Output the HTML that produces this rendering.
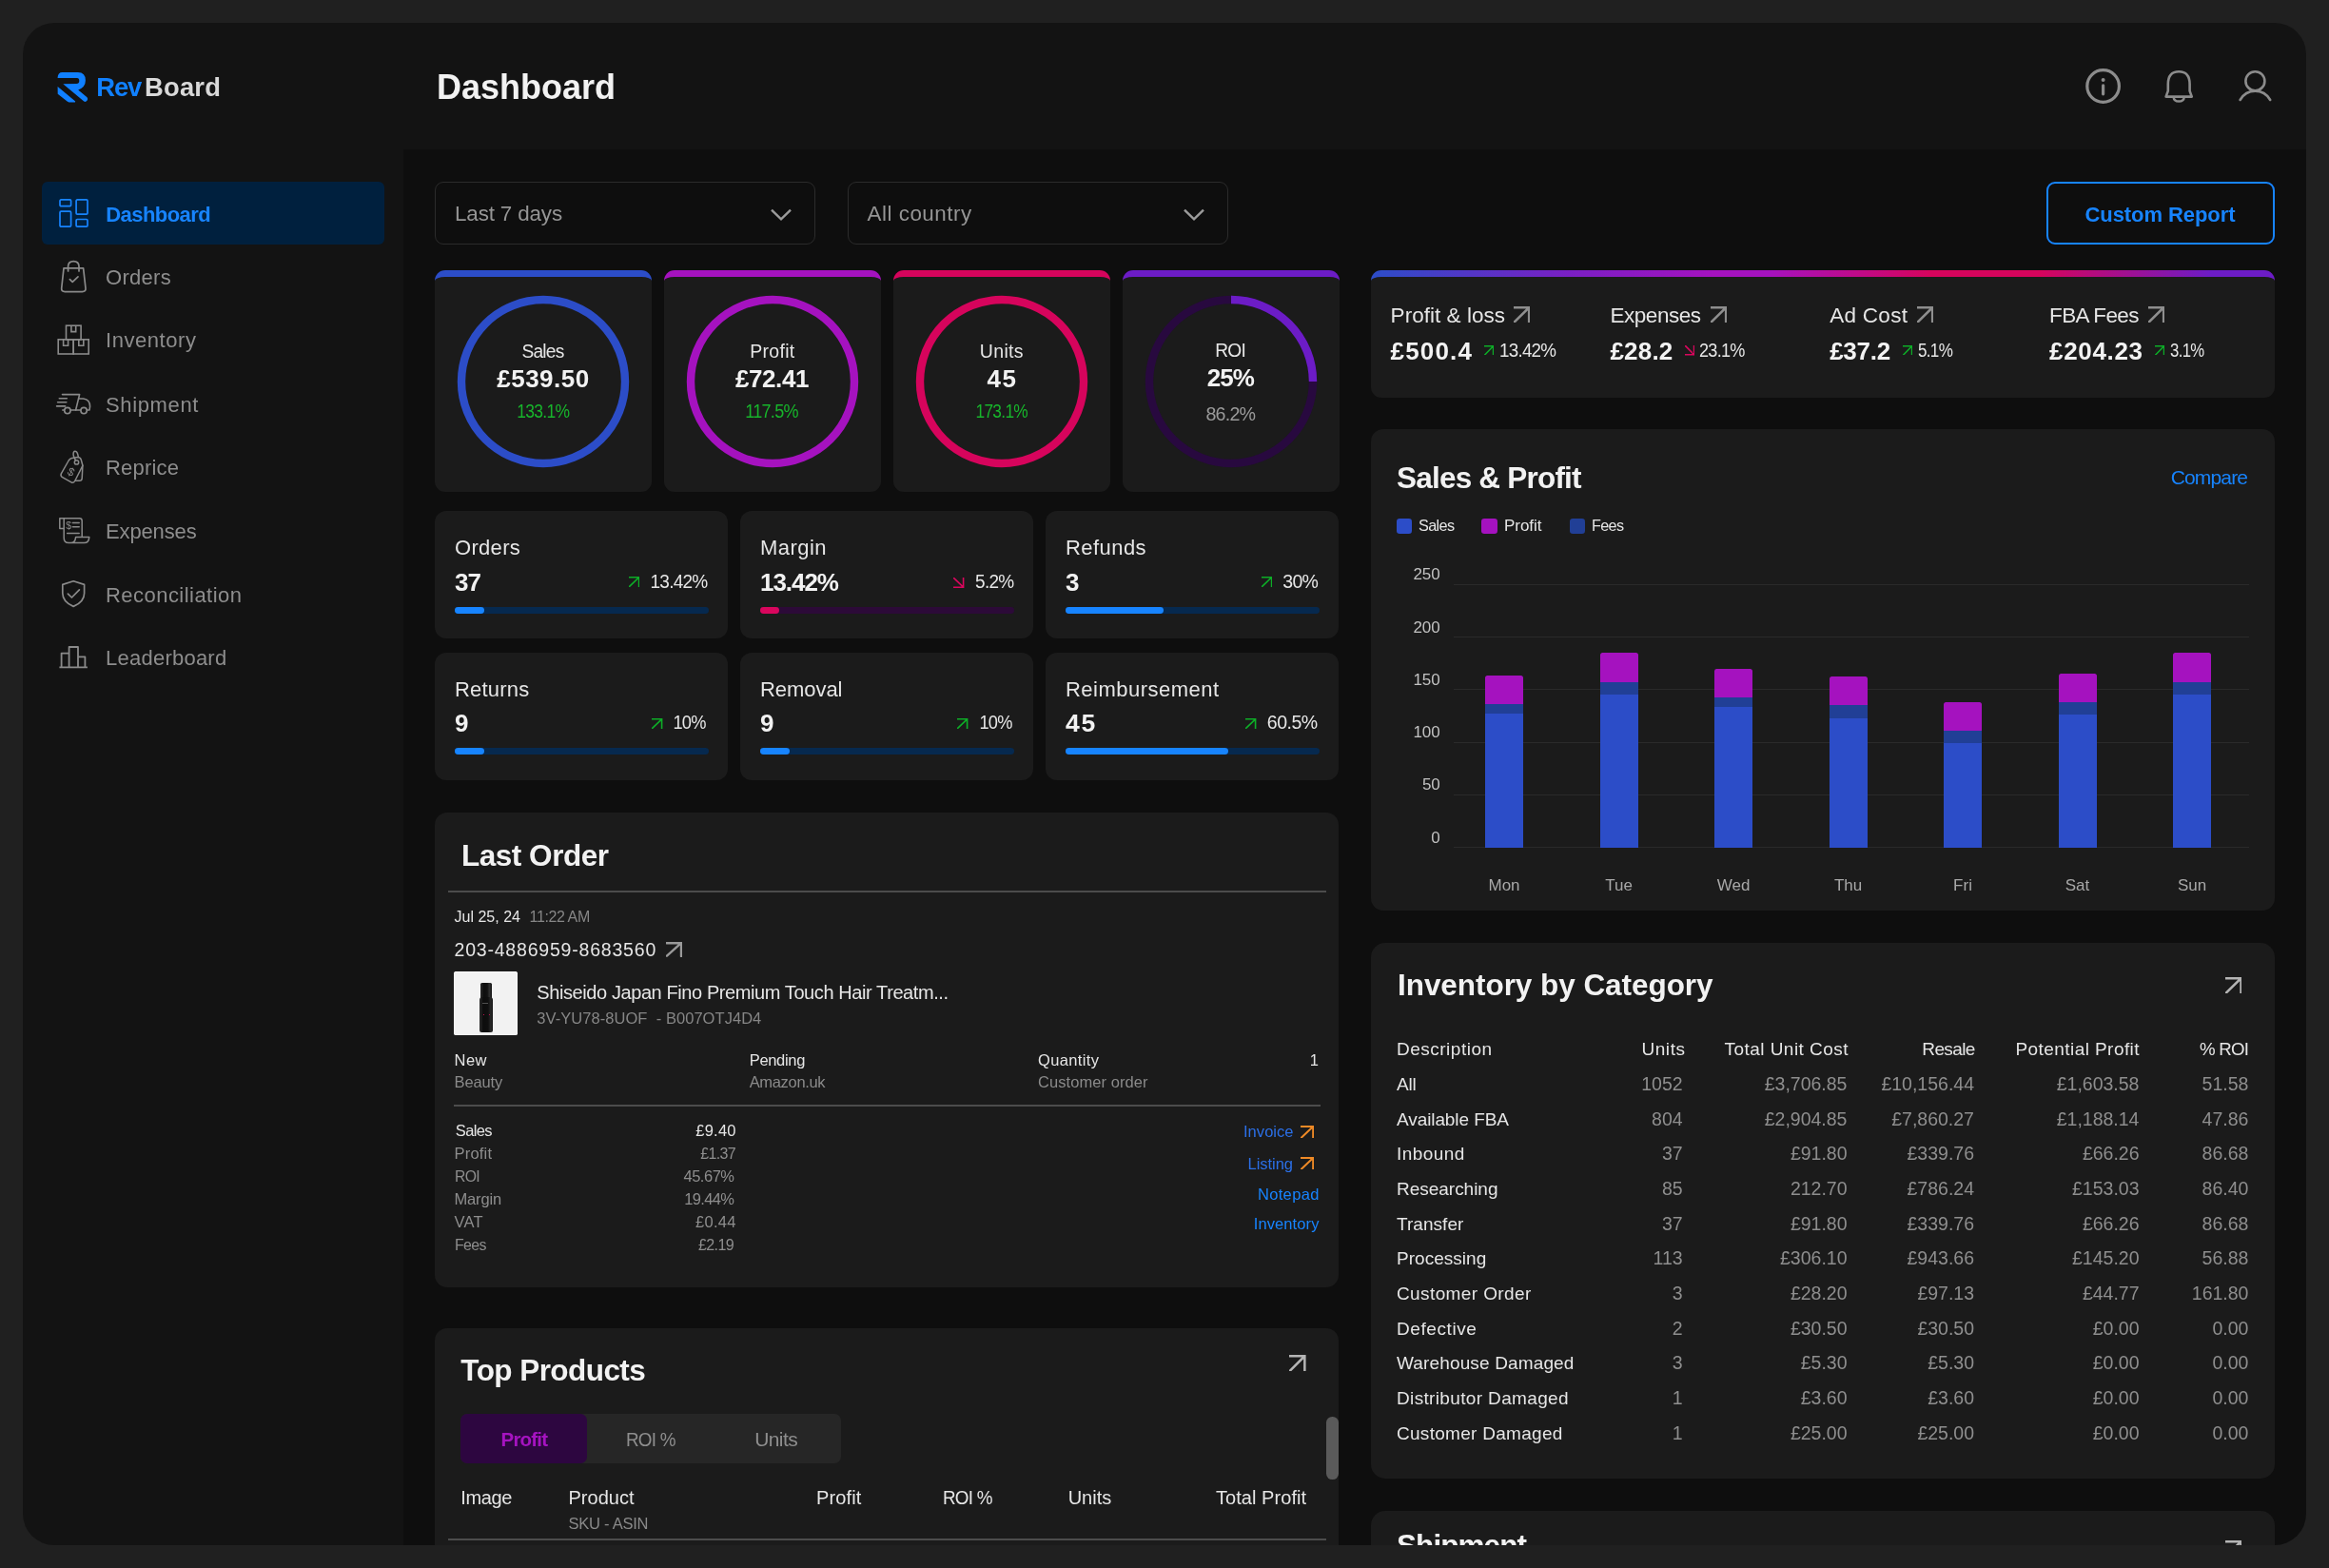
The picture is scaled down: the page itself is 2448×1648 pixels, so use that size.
<!DOCTYPE html>
<html lang="en"><head><meta charset="utf-8"><title>RevBoard Dashboard</title>
<style>
html,body{margin:0;padding:0;background:#202020;}
body{width:2448px;height:1648px;overflow:hidden;position:relative;font-family:"Liberation Sans",sans-serif;}
#page{will-change:transform;position:absolute;left:0;top:0;width:2448px;height:1648px;background:#131313;clip-path:inset(24px 24px 24px 24px round 33px);overflow:hidden;}
.t{position:absolute;white-space:nowrap;margin:0;padding:0;}
.b{position:absolute;display:block;}
</style></head>
<body>
<div id="page">
<div class="b" style="left:424.0px;top:157.0px;width:2000.0px;height:1467.0px;background:#0e0e0e;"></div>
<svg class="b" style="left:60.0px;top:75.0px;" width="34" height="34" viewBox="0 0 34 34" fill="none"><path d="M0.6 7.1V6.5Q0.8 0.9 5.5 0.9H21.9Q29.9 0.9 29.9 9.4Q29.9 16.5 22.2 19.4L31.5 27.3Q33 29 31.5 30.8Q30 32.6 28.2 31.4L6.3 13.2L20.4 13Q23.3 13 23.3 10Q23.3 7.1 21 7.1Z" fill="#1080ff"/><path d="M0.6 15.9L19.2 31.4L18.9 32.4H12.5Q11.6 32.5 10.6 31.6L0.7 23.8Z" fill="#1080ff"/></svg>
<div class="t" style="left:101.3px;top:74.0px;font-size:27.4px;line-height:36px;color:#1080ff;font-weight:700;letter-spacing:-1.10px;">Rev</div>
<div class="t" style="left:152.1px;top:74.0px;font-size:27.4px;line-height:36px;color:#d9d9d9;font-weight:700;letter-spacing:0.16px;">Board</div>
<div class="t" style="left:459.0px;top:67.9px;font-size:36px;line-height:47px;color:#f2f2f2;font-weight:700;">Dashboard</div>
<svg class="b" style="left:2190.0px;top:70.0px;" width="41" height="41" viewBox="0 0 41 41" fill="none"><circle cx="20.6" cy="20.5" r="16.8" stroke="#8c8c8c" stroke-width="3.2"/><circle cx="20.6" cy="14" r="2" fill="#8c8c8c"/><path d="M20.6 19.8V28.8" stroke="#8c8c8c" stroke-width="3.2" stroke-linecap="round"/></svg>
<svg class="b" style="left:2272.0px;top:70.0px;" width="38" height="42" viewBox="0 0 38 42" fill="none"><path d="M4.6 31.6H31.8L29.6 25.6V18.5Q29.6 5.3 18.2 5.3Q6.8 5.3 6.8 18.5V25.6Z" stroke="#8c8c8c" stroke-width="2.6" stroke-linejoin="round"/><path d="M12.6 32Q13 36.6 18.2 36.6Q23.4 36.6 23.8 32" stroke="#8c8c8c" stroke-width="2.5"/></svg>
<svg class="b" style="left:2350.0px;top:70.0px;" width="42" height="42" viewBox="0 0 42 42" fill="none"><circle cx="20.4" cy="15.2" r="10" stroke="#8c8c8c" stroke-width="2.6"/><path d="M4.6 35Q10 25.6 20.4 25.6Q30.8 25.6 36.2 35" stroke="#8c8c8c" stroke-width="2.6" stroke-linecap="round"/></svg>
<div class="b" style="left:44.0px;top:190.5px;width:360.0px;height:66.5px;background:#00203e;border-radius:6px;"></div>
<div class="t" style="left:111.3px;top:210.5px;font-size:22px;line-height:29px;color:#1784ff;font-weight:700;letter-spacing:-0.56px;">Dashboard</div>
<div class="t" style="left:111.0px;top:277.0px;font-size:22px;line-height:29px;color:#8d8d8d;letter-spacing:0.29px;">Orders</div>
<div class="t" style="left:111.0px;top:343.4px;font-size:22px;line-height:29px;color:#8d8d8d;letter-spacing:0.56px;">Inventory</div>
<div class="t" style="left:111.0px;top:410.5px;font-size:22px;line-height:29px;color:#8d8d8d;letter-spacing:0.64px;">Shipment</div>
<div class="t" style="left:111.0px;top:477.2px;font-size:22px;line-height:29px;color:#8d8d8d;letter-spacing:0.20px;">Reprice</div>
<div class="t" style="left:111.0px;top:543.8px;font-size:22px;line-height:29px;color:#8d8d8d;letter-spacing:-0.13px;">Expenses</div>
<div class="t" style="left:111.0px;top:610.5px;font-size:22px;line-height:29px;color:#8d8d8d;letter-spacing:0.46px;">Reconciliation</div>
<div class="t" style="left:111.0px;top:677.2px;font-size:22px;line-height:29px;color:#8d8d8d;letter-spacing:0.24px;">Leaderboard</div>
<svg class="b" style="left:61.0px;top:208.0px;" width="33" height="33" viewBox="0 0 33 33" fill="none"><g stroke="#1784ff" stroke-width="1.7"><rect x="2" y="1.9" width="11.6" height="6.8" rx="1.2"/><rect x="19.1" y="1.9" width="11.9" height="15.2" rx="1.2"/><rect x="2" y="14.2" width="11.6" height="16" rx="1.2"/><rect x="19.1" y="22.5" width="11.9" height="7.7" rx="1.2"/></g></svg>
<svg class="b" style="left:62.0px;top:272.0px;" width="32" height="38" viewBox="0 0 32 38" fill="none"><g stroke="#8a8a8a" stroke-width="1.7" stroke-linejoin="round" stroke-linecap="round"><path d="M5 9.8H25.6L28 31Q28.3 34.6 24.5 34.6H6.2Q2.4 34.6 2.7 31Z"/><path d="M9.6 13V8.2Q9.6 2.6 15.3 2.6Q21 2.6 21 8.2V13"/><path d="M11.4 21.6L14.2 24.4L20 18.8"/></g></svg>
<svg class="b" style="left:59.0px;top:340.0px;" width="37" height="35" viewBox="0 0 37 35" fill="none"><g stroke="#8a8a8a" stroke-width="1.6"><rect x="10.5" y="2.2" width="15.6" height="14.6"/><path d="M15.9 2.2V8.6H20.7V2.2"/><rect x="2.2" y="16.8" width="16" height="15.2"/><rect x="18.2" y="16.8" width="16" height="15.2"/><path d="M7.6 16.8V23.2H12.6V16.8M23.8 16.8V23.2H28.8V16.8"/></g></svg>
<svg class="b" style="left:58.0px;top:412.0px;" width="40" height="26" viewBox="0 0 40 26" fill="none"><g stroke="#8a8a8a" stroke-width="1.6" stroke-linecap="round" stroke-linejoin="round"><path d="M7.5 2.6H25.6L21.6 19H16.2M4.3 6.7H12.3M2.6 10.8H11.8M1.6 14.9H10.6M7.8 19H9.6"/><path d="M24.6 7H29.6Q36.6 8 36.6 15.2L36 19H33.4M26.8 19H21.6"/><circle cx="12.9" cy="19.6" r="3.2"/><circle cx="30.1" cy="19.6" r="3.2"/></g></svg>
<svg class="b" style="left:62.0px;top:472.0px;" width="28" height="38" viewBox="0 0 28 38" fill="none"><g stroke="#8a8a8a" stroke-width="1.5" stroke-linecap="round" stroke-linejoin="round"><path d="M10.2 12Q11.4 10 13.6 9.5L19.6 8.6Q22.2 8.6 23.2 11L24.9 17.3L16.7 33.5Q15.6 35.6 13.4 35.2L3.2 29.4Q1.4 28 2.3 25.9Z"/><path d="M24.9 17.3L24.2 30.7Q24 33.2 21.6 33.3L17.3 33.3"/><circle cx="18.5" cy="13.9" r="2.2"/><path d="M17.6 12Q15.2 8 15.1 6Q15 2.2 16.9 2.2Q18.6 2.2 19.6 5L20.4 8.4"/></g><text x="9.2" y="28.2" font-family="Liberation Sans" font-size="12" fill="#8a8a8a" transform="rotate(28 12.7 24)">$</text></svg>
<svg class="b" style="left:61.0px;top:543.0px;" width="34" height="30" viewBox="0 0 34 30" fill="none"><g stroke="#8a8a8a" stroke-width="1.5" stroke-linecap="round" stroke-linejoin="round"><path d="M1.8 1.8H22.6Q25.2 1.8 25.2 4.4V21.2M1.8 1.8V12.6H6.2V1.8M6.2 12.6V22.6Q6.2 27.6 11.2 27.6H27.6Q32.2 27.6 32.8 21.6H18.6Q18 27.6 13.4 27.6"/><path d="M15.4 6.4H22.2M15.4 10.8H22.2M9.6 17.6H22.2"/></g><text x="8.2" y="13.2" font-family="Liberation Sans" font-size="10.5" fill="#8a8a8a">$</text></svg>
<svg class="b" style="left:63.0px;top:609.0px;" width="28" height="30" viewBox="0 0 28 30" fill="none"><g stroke="#8a8a8a" stroke-width="1.7" stroke-linecap="round" stroke-linejoin="round"><path d="M14.2 1.8L25.6 5.4V14.4Q25.6 23.4 14.2 28.4Q2.8 23.4 2.8 14.4V5.4Z"/><path d="M8.4 15.2L12.4 19L20.4 10.8"/></g></svg>
<svg class="b" style="left:61.0px;top:678.0px;" width="32" height="26" viewBox="0 0 32 26" fill="none"><g stroke="#8a8a8a" stroke-width="1.8" stroke-linejoin="round"><path d="M1.4 23.4H30.9M3.6 23.4V8.6H11.6M11.6 23.4V2H21V23.4M21 12.4H28.4V23.4"/></g></svg>
<div class="b" style="left:457.0px;top:190.5px;width:400.0px;height:66.5px;background:#0e0e0e;border-radius:9px;border:1.5px solid #2b2b2b;box-sizing:border-box;"></div>
<div class="t" style="left:478.0px;top:210.3px;font-size:22.4px;line-height:29px;color:#959595;letter-spacing:-0.14px;">Last 7 days</div>
<svg class="b" style="left:809.0px;top:218.0px;" width="26" height="16" viewBox="0 0 26 16" fill="none"><path d="M2 2.6L12 12.4L22 2.6" stroke="#9b9b9b" stroke-width="2.4" stroke-linejoin="miter"/></svg>
<div class="b" style="left:890.5px;top:190.5px;width:400.0px;height:66.5px;background:#0e0e0e;border-radius:9px;border:1.5px solid #2b2b2b;box-sizing:border-box;"></div>
<div class="t" style="left:911.5px;top:210.3px;font-size:22.4px;line-height:29px;color:#959595;letter-spacing:0.52px;">All country</div>
<svg class="b" style="left:1242.5px;top:218.0px;" width="26" height="16" viewBox="0 0 26 16" fill="none"><path d="M2 2.6L12 12.4L22 2.6" stroke="#9b9b9b" stroke-width="2.4" stroke-linejoin="miter"/></svg>
<div class="b" style="left:2151.0px;top:190.5px;width:239.5px;height:66.5px;background:transparent;border-radius:9px;border:2px solid #1784ff;box-sizing:border-box;"></div>
<div class="t" style="left:2191.5px;top:210.6px;font-size:22px;line-height:29px;color:#1784ff;font-weight:700;letter-spacing:-0.07px;">Custom Report</div>
<div class="b" style="left:457.0px;top:284.0px;width:227.6px;height:60.0px;background:#2c4dc8;border-radius:11px;"></div>
<div class="b" style="left:457.0px;top:291.0px;width:227.6px;height:226.0px;background:#1b1b1b;border-radius:11px 11px 11px 11px / 4px 4px 11px 11px;"></div>
<svg class="b" style="left:478.7px;top:308.8px;" width="184" height="184" viewBox="0 0 184 184" fill="none"><circle cx="92" cy="92" r="86" stroke="#2c4dc8" stroke-width="8.4"/></svg>
<div class="t" style="left:547.9px;top:357.2px;font-size:19.5px;line-height:25px;color:#e6e6e6;letter-spacing:-0.78px;width:45.7px;transform:scaleX(0.9834);transform-origin:50% 50%;">Sales</div>
<div class="t" style="left:522.3px;top:380.9px;font-size:26px;line-height:34px;color:#f2f2f2;font-weight:700;letter-spacing:0.47px;">£539.50</div>
<div class="t" style="left:539.6px;top:419.7px;font-size:19.5px;line-height:25px;color:#17b42b;letter-spacing:-0.78px;width:62.2px;transform:scaleX(0.8966);transform-origin:50% 50%;">133.1%</div>
<div class="b" style="left:698.0px;top:284.0px;width:227.6px;height:60.0px;background:#a512bf;border-radius:11px;"></div>
<div class="b" style="left:698.0px;top:291.0px;width:227.6px;height:226.0px;background:#1b1b1b;border-radius:11px 11px 11px 11px / 4px 4px 11px 11px;"></div>
<svg class="b" style="left:719.7px;top:308.8px;" width="184" height="184" viewBox="0 0 184 184" fill="none"><circle cx="92" cy="92" r="86" stroke="#a512bf" stroke-width="8.4"/></svg>
<div class="t" style="left:788.2px;top:357.2px;font-size:19.5px;line-height:25px;color:#e6e6e6;letter-spacing:0.30px;">Profit</div>
<div class="t" style="left:773.1px;top:380.9px;font-size:26px;line-height:34px;color:#f2f2f2;font-weight:700;letter-spacing:-0.45px;">£72.41</div>
<div class="t" style="left:781.3px;top:419.7px;font-size:19.5px;line-height:25px;color:#17b42b;letter-spacing:-0.78px;width:60.8px;transform:scaleX(0.9261);transform-origin:50% 50%;">117.5%</div>
<div class="b" style="left:939.0px;top:284.0px;width:227.6px;height:60.0px;background:#d6045c;border-radius:11px;"></div>
<div class="b" style="left:939.0px;top:291.0px;width:227.6px;height:226.0px;background:#1b1b1b;border-radius:11px 11px 11px 11px / 4px 4px 11px 11px;"></div>
<svg class="b" style="left:960.7px;top:308.8px;" width="184" height="184" viewBox="0 0 184 184" fill="none"><circle cx="92" cy="92" r="86" stroke="#d6045c" stroke-width="8.4"/></svg>
<div class="t" style="left:1029.8px;top:357.2px;font-size:19.5px;line-height:25px;color:#e6e6e6;letter-spacing:0.34px;">Units</div>
<div class="t" style="left:1037.4px;top:380.9px;font-size:26px;line-height:34px;color:#f2f2f2;font-weight:700;letter-spacing:1.66px;">45</div>
<div class="t" style="left:1021.6px;top:419.7px;font-size:19.5px;line-height:25px;color:#17b42b;letter-spacing:-0.78px;width:62.2px;transform:scaleX(0.8885);transform-origin:50% 50%;">173.1%</div>
<div class="b" style="left:1180.0px;top:284.0px;width:227.6px;height:60.0px;background:#6c1cc6;border-radius:11px;"></div>
<div class="b" style="left:1180.0px;top:291.0px;width:227.6px;height:226.0px;background:#1b1b1b;border-radius:11px 11px 11px 11px / 4px 4px 11px 11px;"></div>
<svg class="b" style="left:1201.7px;top:308.8px;" width="184" height="184" viewBox="0 0 184 184" fill="none"><circle cx="92" cy="92" r="86" stroke="#28093f" stroke-width="8.4"/><path d="M92 6A86 86 0 0 1 178 92" stroke="#6c1cc6" stroke-width="8.4"/></svg>
<div class="t" style="left:1277.1px;top:355.7px;font-size:19.5px;line-height:25px;color:#e6e6e6;letter-spacing:-0.78px;width:33.1px;transform:scaleX(0.9816);transform-origin:50% 50%;">ROI</div>
<div class="t" style="left:1268.7px;top:380.3px;font-size:26px;line-height:34px;color:#f2f2f2;font-weight:700;letter-spacing:-0.97px;">25%</div>
<div class="t" style="left:1266.9px;top:422.2px;font-size:20px;line-height:26px;color:#9a9a9a;letter-spacing:-0.80px;width:53.5px;transform:scaleX(0.9830);transform-origin:50% 50%;">86.2%</div>
<div class="b" style="left:1440.5px;top:284.0px;width:950.0px;height:60.0px;background:transparent;border-radius:11px;background:linear-gradient(90deg,#2c4dc8 0%,#7a1fc4 22%,#a512bf 38%,#a512bf 44%,#d6045c 62%,#d6045c 74%,#6c1cc6 93%,#6c1cc6 100%);"></div>
<div class="b" style="left:1440.5px;top:291.0px;width:950.0px;height:126.5px;background:#1b1b1b;border-radius:11px 11px 11px 11px / 4px 4px 11px 11px;"></div>
<div class="t" style="left:1461.6px;top:317.4px;font-size:22.5px;line-height:29px;color:#e6e6e6;letter-spacing:0.03px;">Profit &amp; loss</div>
<svg class="b" style="left:1590.7px;top:322.0px;" width="17.5" height="17.2" viewBox="0 0 17.5 17.2" fill="none"><path d="M1.04 16.16L16.20 1.30M0.53 1.30H16.20V16.68" stroke="#8e8e8e" stroke-width="2.6" stroke-linecap="round" stroke-linejoin="miter"/></svg>
<div class="t" style="left:1461.6px;top:351.7px;font-size:26px;line-height:34px;color:#f2f2f2;font-weight:700;letter-spacing:1.15px;">£500.4</div>
<svg class="b" style="left:1559.9px;top:362.6px;" width="10.4" height="10.6" viewBox="0 0 10.4 10.6" fill="none"><path d="M0.64 9.96L9.60 0.80M0.31 0.80H9.60V10.28" stroke="#0dad27" stroke-width="1.6" stroke-linecap="round" stroke-linejoin="miter"/></svg>
<div class="t" style="left:1576.4px;top:356.3px;font-size:19.5px;line-height:25px;color:#e6e6e6;letter-spacing:-0.78px;width:62.2px;transform:scaleX(0.9640);transform-origin:0 50%;">13.42%</div>
<div class="t" style="left:1692.4px;top:317.4px;font-size:22.5px;line-height:29px;color:#e6e6e6;letter-spacing:-0.44px;">Expenses</div>
<svg class="b" style="left:1797.6px;top:322.0px;" width="17.5" height="17.2" viewBox="0 0 17.5 17.2" fill="none"><path d="M1.04 16.16L16.20 1.30M0.53 1.30H16.20V16.68" stroke="#8e8e8e" stroke-width="2.6" stroke-linecap="round" stroke-linejoin="miter"/></svg>
<div class="t" style="left:1692.4px;top:351.7px;font-size:26px;line-height:34px;color:#f2f2f2;font-weight:700;letter-spacing:0.21px;">£28.2</div>
<svg class="b" style="left:1770.6px;top:363.0px;" width="10.4" height="10.6" viewBox="0 0 10.4 10.6" fill="none"><path d="M0.64 0.64L9.60 9.80M0.31 9.80H9.60V0.32" stroke="#d9065d" stroke-width="1.6" stroke-linecap="round" stroke-linejoin="miter"/></svg>
<div class="t" style="left:1786.4px;top:356.3px;font-size:19.5px;line-height:25px;color:#e6e6e6;letter-spacing:-0.78px;width:52.2px;transform:scaleX(0.9277);transform-origin:0 50%;">23.1%</div>
<div class="t" style="left:1923.2px;top:317.4px;font-size:22.5px;line-height:29px;color:#e6e6e6;letter-spacing:0.29px;">Ad Cost</div>
<svg class="b" style="left:2014.5px;top:322.0px;" width="17.5" height="17.2" viewBox="0 0 17.5 17.2" fill="none"><path d="M1.04 16.16L16.20 1.30M0.53 1.30H16.20V16.68" stroke="#8e8e8e" stroke-width="2.6" stroke-linecap="round" stroke-linejoin="miter"/></svg>
<div class="t" style="left:1923.2px;top:351.7px;font-size:26px;line-height:34px;color:#f2f2f2;font-weight:700;letter-spacing:-0.29px;">£37.2</div>
<svg class="b" style="left:1999.7px;top:362.6px;" width="10.4" height="10.6" viewBox="0 0 10.4 10.6" fill="none"><path d="M0.64 9.96L9.60 0.80M0.31 0.80H9.60V10.28" stroke="#0dad27" stroke-width="1.6" stroke-linecap="round" stroke-linejoin="miter"/></svg>
<div class="t" style="left:2016.2px;top:356.3px;font-size:19.5px;line-height:25px;color:#e6e6e6;letter-spacing:-0.78px;width:42.1px;transform:scaleX(0.8739);transform-origin:0 50%;">5.1%</div>
<div class="t" style="left:2154.1px;top:317.4px;font-size:22.5px;line-height:29px;color:#e6e6e6;letter-spacing:-0.63px;">FBA Fees</div>
<svg class="b" style="left:2257.6px;top:322.0px;" width="17.5" height="17.2" viewBox="0 0 17.5 17.2" fill="none"><path d="M1.04 16.16L16.20 1.30M0.53 1.30H16.20V16.68" stroke="#8e8e8e" stroke-width="2.6" stroke-linecap="round" stroke-linejoin="miter"/></svg>
<div class="t" style="left:2154.1px;top:351.7px;font-size:26px;line-height:34px;color:#f2f2f2;font-weight:700;letter-spacing:0.65px;">£204.23</div>
<svg class="b" style="left:2264.6px;top:362.6px;" width="10.4" height="10.6" viewBox="0 0 10.4 10.6" fill="none"><path d="M0.64 9.96L9.60 0.80M0.31 0.80H9.60V10.28" stroke="#0dad27" stroke-width="1.6" stroke-linecap="round" stroke-linejoin="miter"/></svg>
<div class="t" style="left:2281.1px;top:356.3px;font-size:19.5px;line-height:25px;color:#e6e6e6;letter-spacing:-0.78px;width:42.1px;transform:scaleX(0.8597);transform-origin:0 50%;">3.1%</div>
<div class="b" style="left:457.0px;top:537.4px;width:308.0px;height:134.0px;background:#1b1b1b;border-radius:12px;"></div>
<div class="t" style="left:478.0px;top:561.2px;font-size:22px;line-height:29px;color:#e6e6e6;letter-spacing:0.31px;">Orders</div>
<div class="t" style="left:478.0px;top:594.7px;font-size:26px;line-height:34px;color:#f2f2f2;font-weight:700;letter-spacing:-0.92px;">37</div>
<div class="t" style="left:682.2px;top:599.1px;font-size:19.5px;line-height:25px;color:#e6e6e6;letter-spacing:-0.78px;margin-right:0.78px;width:62.2px;transform:scaleX(0.9753);transform-origin:100% 50%;">13.42%</div>
<svg class="b" style="left:661.1px;top:606.3px;" width="11.4" height="11.0" viewBox="0 0 11.4 11.0" fill="none"><path d="M0.64 10.36L10.60 0.80M0.34 0.80H10.60V10.67" stroke="#0dad27" stroke-width="1.6" stroke-linecap="round" stroke-linejoin="miter"/></svg>
<div class="b" style="left:478.0px;top:638.1px;width:267.0px;height:6.9px;background:#06294f;border-radius:3.45px;"></div>
<div class="b" style="left:478.0px;top:638.1px;width:31.0px;height:6.9px;background:#1784ff;border-radius:3.45px;"></div>
<div class="b" style="left:778.0px;top:537.4px;width:308.0px;height:134.0px;background:#1b1b1b;border-radius:12px;"></div>
<div class="t" style="left:799.0px;top:561.2px;font-size:22px;line-height:29px;color:#e6e6e6;letter-spacing:0.45px;">Margin</div>
<div class="t" style="left:799.0px;top:594.7px;font-size:26px;line-height:34px;color:#f2f2f2;font-weight:700;letter-spacing:-1.04px;">13.42%</div>
<div class="t" style="left:1023.7px;top:599.1px;font-size:19.5px;line-height:25px;color:#e6e6e6;letter-spacing:-0.78px;margin-right:0.78px;width:42.1px;transform:scaleX(0.9737);transform-origin:100% 50%;">5.2%</div>
<svg class="b" style="left:1002.2px;top:606.7px;" width="11.4" height="11.0" viewBox="0 0 11.4 11.0" fill="none"><path d="M0.64 0.64L10.60 10.20M0.34 10.20H10.60V0.33" stroke="#d9065d" stroke-width="1.6" stroke-linecap="round" stroke-linejoin="miter"/></svg>
<div class="b" style="left:799.0px;top:638.1px;width:267.0px;height:6.9px;background:#2c0a38;border-radius:3.45px;"></div>
<div class="b" style="left:799.0px;top:638.1px;width:20.0px;height:6.9px;background:#d9065d;border-radius:3.45px;"></div>
<div class="b" style="left:1099.0px;top:537.4px;width:308.0px;height:134.0px;background:#1b1b1b;border-radius:12px;"></div>
<div class="t" style="left:1120.0px;top:561.2px;font-size:22px;line-height:29px;color:#e6e6e6;letter-spacing:0.44px;">Refunds</div>
<div class="t" style="left:1120.0px;top:594.7px;font-size:26px;line-height:34px;color:#f2f2f2;font-weight:700;">3</div>
<div class="t" style="left:1348.3px;top:599.1px;font-size:19.5px;line-height:25px;color:#e6e6e6;letter-spacing:-0.76px;margin-right:0.76px;">30%</div>
<svg class="b" style="left:1325.7px;top:606.3px;" width="11.4" height="11.0" viewBox="0 0 11.4 11.0" fill="none"><path d="M0.64 10.36L10.60 0.80M0.34 0.80H10.60V10.67" stroke="#0dad27" stroke-width="1.6" stroke-linecap="round" stroke-linejoin="miter"/></svg>
<div class="b" style="left:1120.0px;top:638.1px;width:267.0px;height:6.9px;background:#06294f;border-radius:3.45px;"></div>
<div class="b" style="left:1120.0px;top:638.1px;width:103.0px;height:6.9px;background:#1784ff;border-radius:3.45px;"></div>
<div class="b" style="left:457.0px;top:685.7px;width:308.0px;height:134.0px;background:#1b1b1b;border-radius:12px;"></div>
<div class="t" style="left:478.0px;top:709.5px;font-size:22px;line-height:29px;color:#e6e6e6;letter-spacing:0.19px;">Returns</div>
<div class="t" style="left:478.0px;top:743.0px;font-size:26px;line-height:34px;color:#f2f2f2;font-weight:700;">9</div>
<div class="t" style="left:705.4px;top:747.4px;font-size:19.5px;line-height:25px;color:#e6e6e6;letter-spacing:-0.78px;margin-right:0.78px;width:37.5px;transform:scaleX(0.9341);transform-origin:100% 50%;">10%</div>
<svg class="b" style="left:685.3px;top:754.6px;" width="11.4" height="11.0" viewBox="0 0 11.4 11.0" fill="none"><path d="M0.64 10.36L10.60 0.80M0.34 0.80H10.60V10.67" stroke="#0dad27" stroke-width="1.6" stroke-linecap="round" stroke-linejoin="miter"/></svg>
<div class="b" style="left:478.0px;top:786.4px;width:267.0px;height:6.9px;background:#06294f;border-radius:3.45px;"></div>
<div class="b" style="left:478.0px;top:786.4px;width:31.0px;height:6.9px;background:#1784ff;border-radius:3.45px;"></div>
<div class="b" style="left:778.0px;top:685.7px;width:308.0px;height:134.0px;background:#1b1b1b;border-radius:12px;"></div>
<div class="t" style="left:799.0px;top:709.5px;font-size:22px;line-height:29px;color:#e6e6e6;letter-spacing:-0.05px;">Removal</div>
<div class="t" style="left:799.0px;top:743.0px;font-size:26px;line-height:34px;color:#f2f2f2;font-weight:700;">9</div>
<div class="t" style="left:1026.5px;top:747.4px;font-size:19.5px;line-height:25px;color:#e6e6e6;letter-spacing:-0.78px;margin-right:0.78px;width:37.5px;transform:scaleX(0.9341);transform-origin:100% 50%;">10%</div>
<svg class="b" style="left:1006.4px;top:754.6px;" width="11.4" height="11.0" viewBox="0 0 11.4 11.0" fill="none"><path d="M0.64 10.36L10.60 0.80M0.34 0.80H10.60V10.67" stroke="#0dad27" stroke-width="1.6" stroke-linecap="round" stroke-linejoin="miter"/></svg>
<div class="b" style="left:799.0px;top:786.4px;width:267.0px;height:6.9px;background:#06294f;border-radius:3.45px;"></div>
<div class="b" style="left:799.0px;top:786.4px;width:31.0px;height:6.9px;background:#1784ff;border-radius:3.45px;"></div>
<div class="b" style="left:1099.0px;top:685.7px;width:308.0px;height:134.0px;background:#1b1b1b;border-radius:12px;"></div>
<div class="t" style="left:1120.0px;top:709.5px;font-size:22px;line-height:29px;color:#e6e6e6;letter-spacing:0.48px;">Reimbursement</div>
<div class="t" style="left:1120.0px;top:743.0px;font-size:26px;line-height:34px;color:#f2f2f2;font-weight:700;letter-spacing:1.66px;width:30.6px;transform:scaleX(1.0201);transform-origin:0 50%;">45</div>
<div class="t" style="left:1331.8px;top:747.4px;font-size:19.5px;line-height:25px;color:#e6e6e6;letter-spacing:-0.50px;margin-right:0.50px;">60.5%</div>
<svg class="b" style="left:1309.2px;top:754.6px;" width="11.4" height="11.0" viewBox="0 0 11.4 11.0" fill="none"><path d="M0.64 10.36L10.60 0.80M0.34 0.80H10.60V10.67" stroke="#0dad27" stroke-width="1.6" stroke-linecap="round" stroke-linejoin="miter"/></svg>
<div class="b" style="left:1120.0px;top:786.4px;width:267.0px;height:6.9px;background:#06294f;border-radius:3.45px;"></div>
<div class="b" style="left:1120.0px;top:786.4px;width:171.0px;height:6.9px;background:#1784ff;border-radius:3.45px;"></div>
<div class="b" style="left:457.0px;top:854.0px;width:950.0px;height:499.0px;background:#1b1b1b;border-radius:13px;"></div>
<div class="t" style="left:485.0px;top:879.4px;font-size:31.5px;line-height:41px;color:#f2f2f2;font-weight:700;letter-spacing:-0.48px;">Last Order</div>
<div class="b" style="left:471.0px;top:936.0px;width:923.0px;height:2.0px;background:#4c4c4c;"></div>
<div class="t" style="left:477.5px;top:952.9px;font-size:16px;line-height:21px;color:#e6e6e6;letter-spacing:0.01px;">Jul 25, 24</div>
<div class="t" style="left:556.6px;top:952.9px;font-size:16px;line-height:21px;color:#868686;letter-spacing:-0.40px;">11:22 AM</div>
<div class="t" style="left:477.5px;top:985.7px;font-size:19.5px;line-height:25px;color:#e6e6e6;letter-spacing:0.80px;">203-4886959-8683560</div>
<svg class="b" style="left:699.6px;top:990.2px;" width="17.2" height="15.6" viewBox="0 0 17.2 15.6" fill="none"><path d="M0.96 14.64L16.00 1.20M0.52 1.20H16.00V15.13" stroke="#9a9a9a" stroke-width="2.4" stroke-linecap="round" stroke-linejoin="miter"/></svg>
<div class="b" style="left:477.1px;top:1020.7px;width:67.1px;height:67.4px;background:#f2f2f2;border-radius:2.5px;overflow:hidden;box-shadow:inset 0 0 0 0.7px #fafafa;"><div style="position:absolute;left:27.9px;top:12.8px;width:11.7px;height:16px;background:linear-gradient(90deg,#2a2a2a 0%,#0d0d0d 30%,#111 60%,#303030 78%,#141414 100%);border-radius:1.5px 1.5px 0 0;"></div><div style="position:absolute;left:27px;top:27.1px;width:13.6px;height:37.6px;background:linear-gradient(90deg,#2e2e2e 0%,#0c0c0c 28%,#0f0f0f 65%,#2b2b2b 85%,#151515 100%);border-radius:3px 3px 2px 2px;"></div><div style="position:absolute;left:30.5px;top:45.4px;width:1.2px;height:1.2px;background:#c0124e;"></div><div style="position:absolute;left:36.6px;top:45.4px;width:1.2px;height:1.2px;background:#c0124e;"></div><div style="position:absolute;left:30px;top:33px;width:6px;height:1.3px;background:#888;opacity:.55"></div></div>
<div class="t" style="left:564.3px;top:1030.2px;font-size:20px;line-height:26px;color:#e6e6e6;letter-spacing:-0.41px;">Shiseido Japan Fino Premium Touch Hair Treatm...</div>
<div class="t" style="left:564.3px;top:1059.8px;font-size:16.5px;line-height:21px;color:#868686;letter-spacing:0.05px;white-space:pre;">3V-YU78-8UOF  - B007OTJ4D4</div>
<div class="t" style="left:477.5px;top:1103.6px;font-size:16.5px;line-height:21px;color:#e6e6e6;letter-spacing:0.50px;">New</div>
<div class="t" style="left:477.5px;top:1127.4px;font-size:16.5px;line-height:21px;color:#8a8a8a;letter-spacing:-0.11px;">Beauty</div>
<div class="t" style="left:787.7px;top:1103.6px;font-size:16.5px;line-height:21px;color:#e6e6e6;letter-spacing:-0.31px;">Pending</div>
<div class="t" style="left:787.7px;top:1127.4px;font-size:16.5px;line-height:21px;color:#8a8a8a;letter-spacing:-0.33px;">Amazon.uk</div>
<div class="t" style="left:1091.0px;top:1103.6px;font-size:16.5px;line-height:21px;color:#e6e6e6;letter-spacing:0.36px;">Quantity</div>
<div class="t" style="left:1091.0px;top:1127.4px;font-size:16.5px;line-height:21px;color:#8a8a8a;letter-spacing:0.07px;">Customer order</div>
<div class="t" style="left:1376.8px;top:1103.6px;font-size:16.5px;line-height:21px;color:#e6e6e6;">1</div>
<div class="b" style="left:477.3px;top:1160.7px;width:910.3px;height:2.0px;background:#4c4c4c;"></div>
<div class="t" style="left:478.8px;top:1178.3px;font-size:16.5px;line-height:21px;color:#e6e6e6;letter-spacing:-0.66px;">Sales</div>
<div class="t" style="left:731.3px;top:1178.3px;font-size:16.5px;line-height:21px;color:#e6e6e6;letter-spacing:0.23px;margin-right:-0.23px;">£9.40</div>
<div class="t" style="left:477.5px;top:1202.2px;font-size:16.5px;line-height:21px;color:#8e8e8e;letter-spacing:0.20px;">Profit</div>
<div class="t" style="left:734.8px;top:1202.2px;font-size:16.5px;line-height:21px;color:#8e8e8e;letter-spacing:-0.66px;margin-right:0.66px;width:38.7px;transform:scaleX(0.9702);transform-origin:100% 50%;">£1.37</div>
<div class="t" style="left:477.5px;top:1226.2px;font-size:16.5px;line-height:21px;color:#8e8e8e;letter-spacing:-0.66px;width:28.0px;transform:scaleX(0.9531);transform-origin:0 50%;">ROI</div>
<div class="t" style="left:718.5px;top:1226.2px;font-size:16.5px;line-height:21px;color:#8e8e8e;letter-spacing:-0.49px;margin-right:0.49px;">45.67%</div>
<div class="t" style="left:477.5px;top:1250.1px;font-size:16.5px;line-height:21px;color:#8e8e8e;letter-spacing:-0.15px;">Margin</div>
<div class="t" style="left:719.3px;top:1250.1px;font-size:16.5px;line-height:21px;color:#8e8e8e;letter-spacing:-0.66px;margin-right:0.66px;">19.44%</div>
<div class="t" style="left:477.5px;top:1274.1px;font-size:16.5px;line-height:21px;color:#8e8e8e;letter-spacing:0.18px;">VAT</div>
<div class="t" style="left:730.9px;top:1274.1px;font-size:16.5px;line-height:21px;color:#8e8e8e;letter-spacing:0.33px;margin-right:-0.33px;">£0.44</div>
<div class="t" style="left:477.5px;top:1298.0px;font-size:16.5px;line-height:21px;color:#8e8e8e;letter-spacing:-0.66px;width:34.7px;transform:scaleX(0.9653);transform-origin:0 50%;">Fees</div>
<div class="t" style="left:733.3px;top:1298.0px;font-size:16.5px;line-height:21px;color:#8e8e8e;letter-spacing:-0.66px;margin-right:0.66px;width:38.7px;transform:scaleX(0.9728);transform-origin:100% 50%;">£2.19</div>
<div class="t" style="left:1307.0px;top:1179.4px;font-size:16.5px;line-height:21px;color:#2b6fe6;letter-spacing:0.04px;margin-right:-0.04px;">Invoice</div>
<svg class="b" style="left:1367.0px;top:1182.6px;" width="14.2" height="13.6" viewBox="0 0 14.2 13.6" fill="none"><path d="M0.80 12.80L13.20 1.00M0.43 1.00H13.20V13.19" stroke="#ef8a26" stroke-width="2" stroke-linecap="round" stroke-linejoin="miter"/></svg>
<div class="t" style="left:1311.5px;top:1212.7px;font-size:16.5px;line-height:21px;color:#2b6fe6;letter-spacing:-0.03px;margin-right:0.03px;">Listing</div>
<svg class="b" style="left:1367.0px;top:1215.6px;" width="14.2" height="13.6" viewBox="0 0 14.2 13.6" fill="none"><path d="M0.80 12.80L13.20 1.00M0.43 1.00H13.20V13.19" stroke="#ef8a26" stroke-width="2" stroke-linecap="round" stroke-linejoin="miter"/></svg>
<div class="t" style="left:1321.9px;top:1244.7px;font-size:16.5px;line-height:21px;color:#1784ff;letter-spacing:0.35px;margin-right:-0.35px;">Notepad</div>
<div class="t" style="left:1317.8px;top:1275.7px;font-size:16.5px;line-height:21px;color:#1784ff;letter-spacing:0.09px;margin-right:-0.09px;">Inventory</div>
<div class="b" style="left:457.0px;top:1396.0px;width:950.0px;height:260.0px;background:#1b1b1b;border-radius:13px;"></div>
<div class="t" style="left:484.3px;top:1420.4px;font-size:31.5px;line-height:41px;color:#f2f2f2;font-weight:700;letter-spacing:-0.56px;">Top Products</div>
<svg class="b" style="left:1355.4px;top:1423.6px;" width="17.6" height="17.6" viewBox="0 0 17.6 17.6" fill="none"><path d="M1.00 16.60L16.35 1.25M0.53 1.25H16.35V17.07" stroke="#b5b5b5" stroke-width="2.5" stroke-linecap="round" stroke-linejoin="miter"/></svg>
<div class="b" style="left:484.3px;top:1486.0px;width:399.7px;height:52.4px;background:#262626;border-radius:7px;"></div>
<div class="b" style="left:484.3px;top:1486.0px;width:133.2px;height:52.4px;background:#2d0640;border-radius:7px;"></div>
<div class="t" style="left:525.6px;top:1499.1px;font-size:21px;line-height:27px;color:#a513c0;font-weight:700;letter-spacing:-0.84px;width:50.6px;transform:scaleX(0.9777);transform-origin:50% 50%;">Profit</div>
<div class="t" style="left:654.8px;top:1499.1px;font-size:21px;line-height:27px;color:#8e8e8e;letter-spacing:-0.84px;width:58.5px;transform:scaleX(0.8977);transform-origin:50% 50%;">ROI %</div>
<div class="t" style="left:793.2px;top:1499.1px;font-size:21px;line-height:27px;color:#8e8e8e;letter-spacing:-0.59px;">Units</div>
<div class="t" style="left:484.3px;top:1561.2px;font-size:20px;line-height:26px;color:#e6e6e6;letter-spacing:-0.40px;">Image</div>
<div class="t" style="left:597.5px;top:1561.2px;font-size:20px;line-height:26px;color:#e6e6e6;letter-spacing:0.01px;">Product</div>
<div class="t" style="left:597.5px;top:1590.5px;font-size:16.5px;line-height:21px;color:#8a8a8a;letter-spacing:-0.24px;">SKU - ASIN</div>
<div class="t" style="left:857.9px;top:1561.2px;font-size:20px;line-height:26px;color:#e6e6e6;letter-spacing:0.16px;">Profit</div>
<div class="t" style="left:990.5px;top:1561.2px;font-size:20px;line-height:26px;color:#e6e6e6;letter-spacing:-0.80px;width:55.7px;transform:scaleX(0.9426);transform-origin:0 50%;">ROI %</div>
<div class="t" style="left:1122.7px;top:1561.2px;font-size:20px;line-height:26px;color:#e6e6e6;letter-spacing:-0.02px;">Units</div>
<div class="t" style="left:1278.0px;top:1561.2px;font-size:20px;line-height:26px;color:#e6e6e6;letter-spacing:0.05px;margin-right:-0.05px;">Total Profit</div>
<div class="b" style="left:470.7px;top:1616.8px;width:923.0px;height:2.0px;background:#4c4c4c;"></div>
<div class="b" style="left:1394.2px;top:1488.8px;width:12.6px;height:66.4px;background:#5a5a5a;border-radius:6.3px;"></div>
<div class="b" style="left:1440.5px;top:450.5px;width:950.0px;height:506.3px;background:#1b1b1b;border-radius:13px;"></div>
<div class="t" style="left:1468.0px;top:481.9px;font-size:31.5px;line-height:41px;color:#f2f2f2;font-weight:700;letter-spacing:-0.79px;">Sales &amp; Profit</div>
<div class="t" style="left:2281.7px;top:488.3px;font-size:21px;line-height:27px;color:#1784ff;letter-spacing:-0.84px;margin-right:0.84px;">Compare</div>
<div class="b" style="left:1467.6px;top:544.5px;width:16.4px;height:16.4px;background:#2c4dc8;border-radius:3.2px;"></div>
<div class="t" style="left:1491.4px;top:542.2px;font-size:17px;line-height:22px;color:#e6e6e6;letter-spacing:-0.68px;width:39.8px;transform:scaleX(0.9546);transform-origin:0 50%;">Sales</div>
<div class="b" style="left:1557.4px;top:544.5px;width:16.4px;height:16.4px;background:#a512bf;border-radius:3.2px;"></div>
<div class="t" style="left:1581.0px;top:542.2px;font-size:17px;line-height:22px;color:#e6e6e6;letter-spacing:-0.04px;">Profit</div>
<div class="b" style="left:1649.5px;top:544.5px;width:16.4px;height:16.4px;background:#213f96;border-radius:3.2px;"></div>
<div class="t" style="left:1673.0px;top:542.2px;font-size:17px;line-height:22px;color:#e6e6e6;letter-spacing:-0.68px;width:35.8px;transform:scaleX(0.9509);transform-origin:0 50%;">Fees</div>
<div class="b" style="left:1527.6px;top:613.8px;width:836.4px;height:1.2px;background:#2a2a2a;"></div>
<div class="t" style="left:1485.4px;top:593.4px;font-size:17px;line-height:22px;color:#c2c2c2;">250</div>
<div class="b" style="left:1527.6px;top:669.0px;width:836.4px;height:1.2px;background:#2a2a2a;"></div>
<div class="t" style="left:1485.4px;top:648.6px;font-size:17px;line-height:22px;color:#c2c2c2;">200</div>
<div class="b" style="left:1527.6px;top:724.2px;width:836.4px;height:1.2px;background:#2a2a2a;"></div>
<div class="t" style="left:1485.4px;top:703.8px;font-size:17px;line-height:22px;color:#c2c2c2;">150</div>
<div class="b" style="left:1527.6px;top:779.5px;width:836.4px;height:1.2px;background:#2a2a2a;"></div>
<div class="t" style="left:1485.4px;top:759.1px;font-size:17px;line-height:22px;color:#c2c2c2;">100</div>
<div class="b" style="left:1527.6px;top:834.7px;width:836.4px;height:1.2px;background:#2a2a2a;"></div>
<div class="t" style="left:1494.9px;top:814.3px;font-size:17px;line-height:22px;color:#c2c2c2;">50</div>
<div class="b" style="left:1527.6px;top:889.9px;width:836.4px;height:1.2px;background:#2a2a2a;"></div>
<div class="t" style="left:1504.3px;top:869.5px;font-size:17px;line-height:22px;color:#c2c2c2;">0</div>
<div class="b" style="left:1561.0px;top:709.5px;width:40.0px;height:181.5px;background:#a512bf;border-radius:2.5px 2.5px 0 0;"></div>
<div class="b" style="left:1561.0px;top:739.6px;width:40.0px;height:151.4px;background:#213f96;"></div>
<div class="b" style="left:1561.0px;top:749.8px;width:40.0px;height:141.2px;background:#2c4dc8;"></div>
<div class="t" style="left:1564.5px;top:919.7px;font-size:17px;line-height:22px;color:#a8a8a8;">Mon</div>
<div class="b" style="left:1681.5px;top:686.3px;width:40.0px;height:204.7px;background:#a512bf;border-radius:2.5px 2.5px 0 0;"></div>
<div class="b" style="left:1681.5px;top:716.5px;width:40.0px;height:174.5px;background:#213f96;"></div>
<div class="b" style="left:1681.5px;top:729.8px;width:40.0px;height:161.2px;background:#2c4dc8;"></div>
<div class="t" style="left:1687.2px;top:919.7px;font-size:17px;line-height:22px;color:#a8a8a8;">Tue</div>
<div class="b" style="left:1802.0px;top:702.8px;width:40.0px;height:188.2px;background:#a512bf;border-radius:2.5px 2.5px 0 0;"></div>
<div class="b" style="left:1802.0px;top:733.0px;width:40.0px;height:158.0px;background:#213f96;"></div>
<div class="b" style="left:1802.0px;top:742.8px;width:40.0px;height:148.2px;background:#2c4dc8;"></div>
<div class="t" style="left:1804.7px;top:919.7px;font-size:17px;line-height:22px;color:#a8a8a8;">Wed</div>
<div class="b" style="left:1922.5px;top:711.2px;width:40.0px;height:179.8px;background:#a512bf;border-radius:2.5px 2.5px 0 0;"></div>
<div class="b" style="left:1922.5px;top:741.4px;width:40.0px;height:149.6px;background:#213f96;"></div>
<div class="b" style="left:1922.5px;top:754.7px;width:40.0px;height:136.3px;background:#2c4dc8;"></div>
<div class="t" style="left:1927.9px;top:919.7px;font-size:17px;line-height:22px;color:#a8a8a8;">Thu</div>
<div class="b" style="left:2043.0px;top:737.9px;width:40.0px;height:153.1px;background:#a512bf;border-radius:2.5px 2.5px 0 0;"></div>
<div class="b" style="left:2043.0px;top:768.0px;width:40.0px;height:123.0px;background:#213f96;"></div>
<div class="b" style="left:2043.0px;top:781.0px;width:40.0px;height:110.0px;background:#2c4dc8;"></div>
<div class="t" style="left:2053.1px;top:919.7px;font-size:17px;line-height:22px;color:#a8a8a8;">Fri</div>
<div class="b" style="left:2163.5px;top:708.0px;width:40.0px;height:183.0px;background:#a512bf;border-radius:2.5px 2.5px 0 0;"></div>
<div class="b" style="left:2163.5px;top:737.9px;width:40.0px;height:153.1px;background:#213f96;"></div>
<div class="b" style="left:2163.5px;top:751.2px;width:40.0px;height:139.8px;background:#2c4dc8;"></div>
<div class="t" style="left:2170.7px;top:919.7px;font-size:17px;line-height:22px;color:#a8a8a8;">Sat</div>
<div class="b" style="left:2284.0px;top:686.3px;width:40.0px;height:204.7px;background:#a512bf;border-radius:2.5px 2.5px 0 0;"></div>
<div class="b" style="left:2284.0px;top:716.5px;width:40.0px;height:174.5px;background:#213f96;"></div>
<div class="b" style="left:2284.0px;top:729.8px;width:40.0px;height:161.2px;background:#2c4dc8;"></div>
<div class="t" style="left:2288.9px;top:919.7px;font-size:17px;line-height:22px;color:#a8a8a8;">Sun</div>
<div class="b" style="left:1440.5px;top:990.5px;width:950.0px;height:563.5px;background:#1b1b1b;border-radius:15px;"></div>
<div class="t" style="left:1469.0px;top:1015.3px;font-size:31.5px;line-height:41px;color:#f2f2f2;font-weight:700;letter-spacing:-0.05px;">Inventory by Category</div>
<svg class="b" style="left:2338.6px;top:1027.0px;" width="17.8" height="17.4" viewBox="0 0 17.8 17.4" fill="none"><path d="M1.00 16.40L16.55 1.25M0.53 1.25H16.55V16.88" stroke="#b5b5b5" stroke-width="2.5" stroke-linecap="round" stroke-linejoin="miter"/></svg>
<div class="t" style="left:1468.0px;top:1090.3px;font-size:19px;line-height:25px;color:#e6e6e6;letter-spacing:0.50px;">Description</div>
<div class="t" style="left:1725.4px;top:1090.3px;font-size:19px;line-height:25px;color:#e6e6e6;letter-spacing:0.58px;margin-right:-0.58px;">Units</div>
<div class="t" style="left:1812.5px;top:1090.3px;font-size:19px;line-height:25px;color:#e6e6e6;letter-spacing:0.46px;margin-right:-0.46px;">Total Unit Cost</div>
<div class="t" style="left:2020.3px;top:1090.3px;font-size:19px;line-height:25px;color:#e6e6e6;letter-spacing:-0.63px;margin-right:0.63px;">Resale</div>
<div class="t" style="left:2118.5px;top:1090.3px;font-size:19px;line-height:25px;color:#e6e6e6;letter-spacing:0.43px;margin-right:-0.43px;">Potential Profit</div>
<div class="t" style="left:2310.5px;top:1090.3px;font-size:19px;line-height:25px;color:#e6e6e6;letter-spacing:-0.76px;margin-right:0.76px;width:52.9px;transform:scaleX(0.9827);transform-origin:100% 50%;">% ROI</div>
<div class="t" style="left:1468.0px;top:1127.0px;font-size:19px;line-height:25px;color:#e6e6e6;letter-spacing:-0.21px;">All</div>
<div class="t" style="left:1725.2px;top:1127.0px;font-size:19.5px;line-height:25px;color:#8e8e8e;">1052</div>
<div class="t" style="left:1854.7px;top:1127.0px;font-size:19.5px;line-height:25px;color:#8e8e8e;">£3,706.85</div>
<div class="t" style="left:1977.4px;top:1127.0px;font-size:19.5px;line-height:25px;color:#8e8e8e;">£10,156.44</div>
<div class="t" style="left:2161.7px;top:1127.0px;font-size:19.5px;line-height:25px;color:#8e8e8e;">£1,603.58</div>
<div class="t" style="left:2314.6px;top:1127.0px;font-size:19.5px;line-height:25px;color:#8e8e8e;">51.58</div>
<div class="t" style="left:1468.0px;top:1163.7px;font-size:19px;line-height:25px;color:#e6e6e6;letter-spacing:-0.09px;">Available FBA</div>
<div class="t" style="left:1736.1px;top:1163.7px;font-size:19.5px;line-height:25px;color:#8e8e8e;">804</div>
<div class="t" style="left:1854.7px;top:1163.7px;font-size:19.5px;line-height:25px;color:#8e8e8e;">£2,904.85</div>
<div class="t" style="left:1988.2px;top:1163.7px;font-size:19.5px;line-height:25px;color:#8e8e8e;">£7,860.27</div>
<div class="t" style="left:2161.7px;top:1163.7px;font-size:19.5px;line-height:25px;color:#8e8e8e;">£1,188.14</div>
<div class="t" style="left:2314.6px;top:1163.7px;font-size:19.5px;line-height:25px;color:#8e8e8e;">47.86</div>
<div class="t" style="left:1468.0px;top:1200.3px;font-size:19px;line-height:25px;color:#e6e6e6;letter-spacing:0.44px;">Inbound</div>
<div class="t" style="left:1746.9px;top:1200.3px;font-size:19.5px;line-height:25px;color:#8e8e8e;">37</div>
<div class="t" style="left:1881.9px;top:1200.3px;font-size:19.5px;line-height:25px;color:#8e8e8e;">£91.80</div>
<div class="t" style="left:2004.5px;top:1200.3px;font-size:19.5px;line-height:25px;color:#8e8e8e;">£339.76</div>
<div class="t" style="left:2188.9px;top:1200.3px;font-size:19.5px;line-height:25px;color:#8e8e8e;">£66.26</div>
<div class="t" style="left:2314.6px;top:1200.3px;font-size:19.5px;line-height:25px;color:#8e8e8e;">86.68</div>
<div class="t" style="left:1468.0px;top:1237.0px;font-size:19px;line-height:25px;color:#e6e6e6;letter-spacing:-0.02px;">Researching</div>
<div class="t" style="left:1746.9px;top:1237.0px;font-size:19.5px;line-height:25px;color:#8e8e8e;">85</div>
<div class="t" style="left:1881.9px;top:1237.0px;font-size:19.5px;line-height:25px;color:#8e8e8e;">212.70</div>
<div class="t" style="left:2004.5px;top:1237.0px;font-size:19.5px;line-height:25px;color:#8e8e8e;">£786.24</div>
<div class="t" style="left:2178.0px;top:1237.0px;font-size:19.5px;line-height:25px;color:#8e8e8e;">£153.03</div>
<div class="t" style="left:2314.6px;top:1237.0px;font-size:19.5px;line-height:25px;color:#8e8e8e;">86.40</div>
<div class="t" style="left:1468.0px;top:1273.6px;font-size:19px;line-height:25px;color:#e6e6e6;letter-spacing:0.04px;">Transfer</div>
<div class="t" style="left:1746.9px;top:1273.6px;font-size:19.5px;line-height:25px;color:#8e8e8e;">37</div>
<div class="t" style="left:1881.9px;top:1273.6px;font-size:19.5px;line-height:25px;color:#8e8e8e;">£91.80</div>
<div class="t" style="left:2004.5px;top:1273.6px;font-size:19.5px;line-height:25px;color:#8e8e8e;">£339.76</div>
<div class="t" style="left:2188.9px;top:1273.6px;font-size:19.5px;line-height:25px;color:#8e8e8e;">£66.26</div>
<div class="t" style="left:2314.6px;top:1273.6px;font-size:19.5px;line-height:25px;color:#8e8e8e;">86.68</div>
<div class="t" style="left:1468.0px;top:1310.3px;font-size:19px;line-height:25px;color:#e6e6e6;letter-spacing:0.03px;">Processing</div>
<div class="t" style="left:1737.5px;top:1310.3px;font-size:19.5px;line-height:25px;color:#8e8e8e;">113</div>
<div class="t" style="left:1871.0px;top:1310.3px;font-size:19.5px;line-height:25px;color:#8e8e8e;">£306.10</div>
<div class="t" style="left:2004.5px;top:1310.3px;font-size:19.5px;line-height:25px;color:#8e8e8e;">£943.66</div>
<div class="t" style="left:2178.0px;top:1310.3px;font-size:19.5px;line-height:25px;color:#8e8e8e;">£145.20</div>
<div class="t" style="left:2314.6px;top:1310.3px;font-size:19.5px;line-height:25px;color:#8e8e8e;">56.88</div>
<div class="t" style="left:1468.0px;top:1346.9px;font-size:19px;line-height:25px;color:#e6e6e6;letter-spacing:0.39px;">Customer Order</div>
<div class="t" style="left:1757.8px;top:1346.9px;font-size:19.5px;line-height:25px;color:#8e8e8e;">3</div>
<div class="t" style="left:1881.9px;top:1346.9px;font-size:19.5px;line-height:25px;color:#8e8e8e;">£28.20</div>
<div class="t" style="left:2015.4px;top:1346.9px;font-size:19.5px;line-height:25px;color:#8e8e8e;">£97.13</div>
<div class="t" style="left:2188.9px;top:1346.9px;font-size:19.5px;line-height:25px;color:#8e8e8e;">£44.77</div>
<div class="t" style="left:2303.8px;top:1346.9px;font-size:19.5px;line-height:25px;color:#8e8e8e;">161.80</div>
<div class="t" style="left:1468.0px;top:1383.6px;font-size:19px;line-height:25px;color:#e6e6e6;letter-spacing:0.59px;">Defective</div>
<div class="t" style="left:1757.8px;top:1383.6px;font-size:19.5px;line-height:25px;color:#8e8e8e;">2</div>
<div class="t" style="left:1881.9px;top:1383.6px;font-size:19.5px;line-height:25px;color:#8e8e8e;">£30.50</div>
<div class="t" style="left:2015.4px;top:1383.6px;font-size:19.5px;line-height:25px;color:#8e8e8e;">£30.50</div>
<div class="t" style="left:2199.7px;top:1383.6px;font-size:19.5px;line-height:25px;color:#8e8e8e;">£0.00</div>
<div class="t" style="left:2325.4px;top:1383.6px;font-size:19.5px;line-height:25px;color:#8e8e8e;">0.00</div>
<div class="t" style="left:1468.0px;top:1420.2px;font-size:19px;line-height:25px;color:#e6e6e6;letter-spacing:0.14px;">Warehouse Damaged</div>
<div class="t" style="left:1757.8px;top:1420.2px;font-size:19.5px;line-height:25px;color:#8e8e8e;">3</div>
<div class="t" style="left:1892.7px;top:1420.2px;font-size:19.5px;line-height:25px;color:#8e8e8e;">£5.30</div>
<div class="t" style="left:2026.2px;top:1420.2px;font-size:19.5px;line-height:25px;color:#8e8e8e;">£5.30</div>
<div class="t" style="left:2199.7px;top:1420.2px;font-size:19.5px;line-height:25px;color:#8e8e8e;">£0.00</div>
<div class="t" style="left:2325.4px;top:1420.2px;font-size:19.5px;line-height:25px;color:#8e8e8e;">0.00</div>
<div class="t" style="left:1468.0px;top:1456.9px;font-size:19px;line-height:25px;color:#e6e6e6;letter-spacing:0.35px;">Distributor Damaged</div>
<div class="t" style="left:1757.8px;top:1456.9px;font-size:19.5px;line-height:25px;color:#8e8e8e;">1</div>
<div class="t" style="left:1892.7px;top:1456.9px;font-size:19.5px;line-height:25px;color:#8e8e8e;">£3.60</div>
<div class="t" style="left:2026.2px;top:1456.9px;font-size:19.5px;line-height:25px;color:#8e8e8e;">£3.60</div>
<div class="t" style="left:2199.7px;top:1456.9px;font-size:19.5px;line-height:25px;color:#8e8e8e;">£0.00</div>
<div class="t" style="left:2325.4px;top:1456.9px;font-size:19.5px;line-height:25px;color:#8e8e8e;">0.00</div>
<div class="t" style="left:1468.0px;top:1493.5px;font-size:19px;line-height:25px;color:#e6e6e6;letter-spacing:0.29px;">Customer Damaged</div>
<div class="t" style="left:1757.8px;top:1493.5px;font-size:19.5px;line-height:25px;color:#8e8e8e;">1</div>
<div class="t" style="left:1881.9px;top:1493.5px;font-size:19.5px;line-height:25px;color:#8e8e8e;">£25.00</div>
<div class="t" style="left:2015.4px;top:1493.5px;font-size:19.5px;line-height:25px;color:#8e8e8e;">£25.00</div>
<div class="t" style="left:2199.7px;top:1493.5px;font-size:19.5px;line-height:25px;color:#8e8e8e;">£0.00</div>
<div class="t" style="left:2325.4px;top:1493.5px;font-size:19.5px;line-height:25px;color:#8e8e8e;">0.00</div>
<div class="b" style="left:1440.5px;top:1587.8px;width:950.0px;height:80.0px;background:#1b1b1b;border-radius:15px;"></div>
<div class="t" style="left:1468.0px;top:1603.9px;font-size:31.5px;line-height:41px;color:#f2f2f2;font-weight:700;letter-spacing:-0.93px;">Shipment</div>
<svg class="b" style="left:2338.6px;top:1618.5px;" width="17.8" height="17.5" viewBox="0 0 17.8 17.5" fill="none"><path d="M1.00 16.50L16.55 1.25M0.53 1.25H16.55V16.97" stroke="#b5b5b5" stroke-width="2.5" stroke-linecap="round" stroke-linejoin="miter"/></svg>
</div>
</body></html>
